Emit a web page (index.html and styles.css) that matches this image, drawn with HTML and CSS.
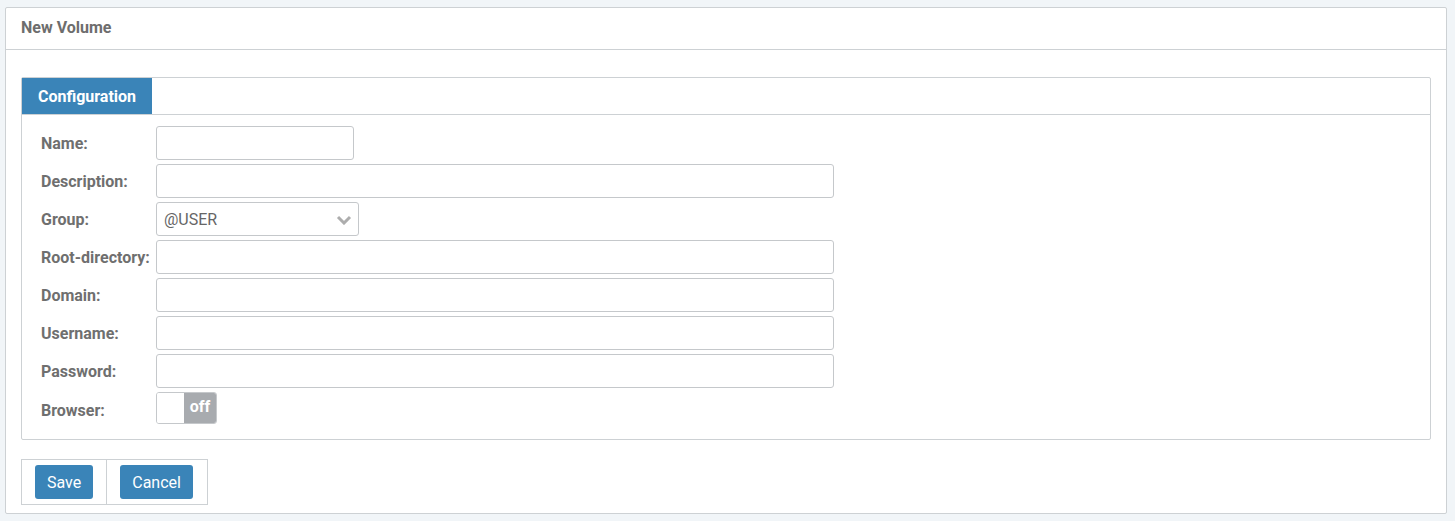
FILE: index.html
```html
<!DOCTYPE html>
<html>
<head>
<meta charset="utf-8">
<link rel="stylesheet" href="styles.css">
</head>
<body>
<div class="panel">
  <div class="panel-header">New Volume</div>
  <div class="panel-body">
    <div class="fieldset">
      <div class="tabbar"><div class="tab">Configuration</div></div>
      <div class="form">
        <div class="row"><label>Name:</label><div class="input w-name"></div></div>
        <div class="row"><label>Description:</label><div class="input w-wide"></div></div>
        <div class="row"><label>Group:</label>
          <div class="input select"><span>@USER</span>
            <svg class="chev" width="16" height="10" viewBox="0 0 16 10"><polyline points="2,2 8,8 14,2" fill="none" stroke="#adadad" stroke-width="3"/></svg>
          </div>
        </div>
        <div class="row"><label>Root-directory:</label><div class="input w-wide"></div></div>
        <div class="row"><label>Domain:</label><div class="input w-wide"></div></div>
        <div class="row"><label>Username:</label><div class="input w-wide"></div></div>
        <div class="row"><label>Password:</label><div class="input w-wide"></div></div>
        <div class="row last"><label>Browser:</label>
          <div class="toggle"><span class="knob"></span><span class="off">off</span></div>
        </div>
      </div>
    </div>
    <div class="buttons">
      <div class="cell"><button class="btn">Save</button></div>
      <div class="cell"><button class="btn">Cancel</button></div>
    </div>
  </div>
</div>
</body>
</html>
```
FILE: styles.css
```css
html, body { margin: 0; padding: 0; }
body {
  background: #f1f5f8;
  font-family: Roboto, "Liberation Sans", Arial, sans-serif;
  width: 1455px;
  height: 521px;
  overflow: hidden;
}
.panel {
  margin: 7px 0 0 5px;
  width: 1440px;
  height: 505px;
  background: #fff;
  border: 1px solid #cdd1d4;
  border-radius: 2px;
}
.panel-header {
  box-sizing: border-box;
  height: 42px;
  border-bottom: 1px solid #cdd1d4;
  padding: 0 0 2px 15px;
  display: flex;
  align-items: center;
  font-size: 16px;
  font-weight: bold;
  color: #6d6d6d;
}
.panel-body {
  padding: 27px 15px 0 15px;
}
.fieldset {
  border: 1px solid #cdd1d4;
  border-radius: 2px;
}
.tabbar {
  height: 36px;
  border-bottom: 1px solid #cdd1d4;
  display: flex;
}
.tab {
  width: 130px;
  background: #3a84b8;
  color: #fff;
  font-size: 16px;
  font-weight: bold;
  display: flex;
  align-items: center;
  justify-content: center;
}
.form {
  padding: 11px 0 15px 19px;
  display: flex;
  flex-direction: column;
  gap: 4px;
}
.row {
  display: flex;
  align-items: center;
  height: 34px;
}
.row.last { height: 32px; }
.row label {
  width: 115px;
  font-size: 16px;
  font-weight: bold;
  color: #6f6f6f;
}
.row.last label { padding-top: 4px; }
.input {
  box-sizing: border-box;
  height: 34px;
  border: 1px solid #c5c8cb;
  border-radius: 3px;
  background: #fff;
}
.w-name { width: 198px; }
.w-wide { width: 678px; }
.select {
  width: 203px;
  display: flex;
  align-items: center;
  justify-content: space-between;
  padding: 0 6px 0 7px;
  font-size: 16px;
  color: #666;
}
.chev { margin-top: 1px; }
.toggle {
  box-sizing: border-box;
  width: 61px;
  height: 32px;
  border: 1px solid #c5c8cb;
  border-radius: 3px;
  display: flex;
  overflow: hidden;
}
.knob { width: 27px; background: #fff; }
.off {
  flex: 1;
  background: #a8abaf;
  color: #fff;
  font-size: 16px;
  font-weight: bold;
  display: flex;
  align-items: center;
  justify-content: center;
  padding-bottom: 3px;
}
.buttons {
  margin-top: 19px;
  display: inline-flex;
  border: 1px solid #cdd1d4;
}
.cell {
  padding: 5px 13px 5px 13px;
}
.cell + .cell {
  border-left: 1px solid #cdd1d4;
  padding-right: 14px;
}
.btn {
  height: 34px;
  padding: 0 12px;
  border: none;
  border-radius: 3px;
  background: #3a84b8;
  color: #fff;
  font-family: Roboto, "Liberation Sans", Arial, sans-serif;
  font-size: 16px;
  display: block;
}
```
